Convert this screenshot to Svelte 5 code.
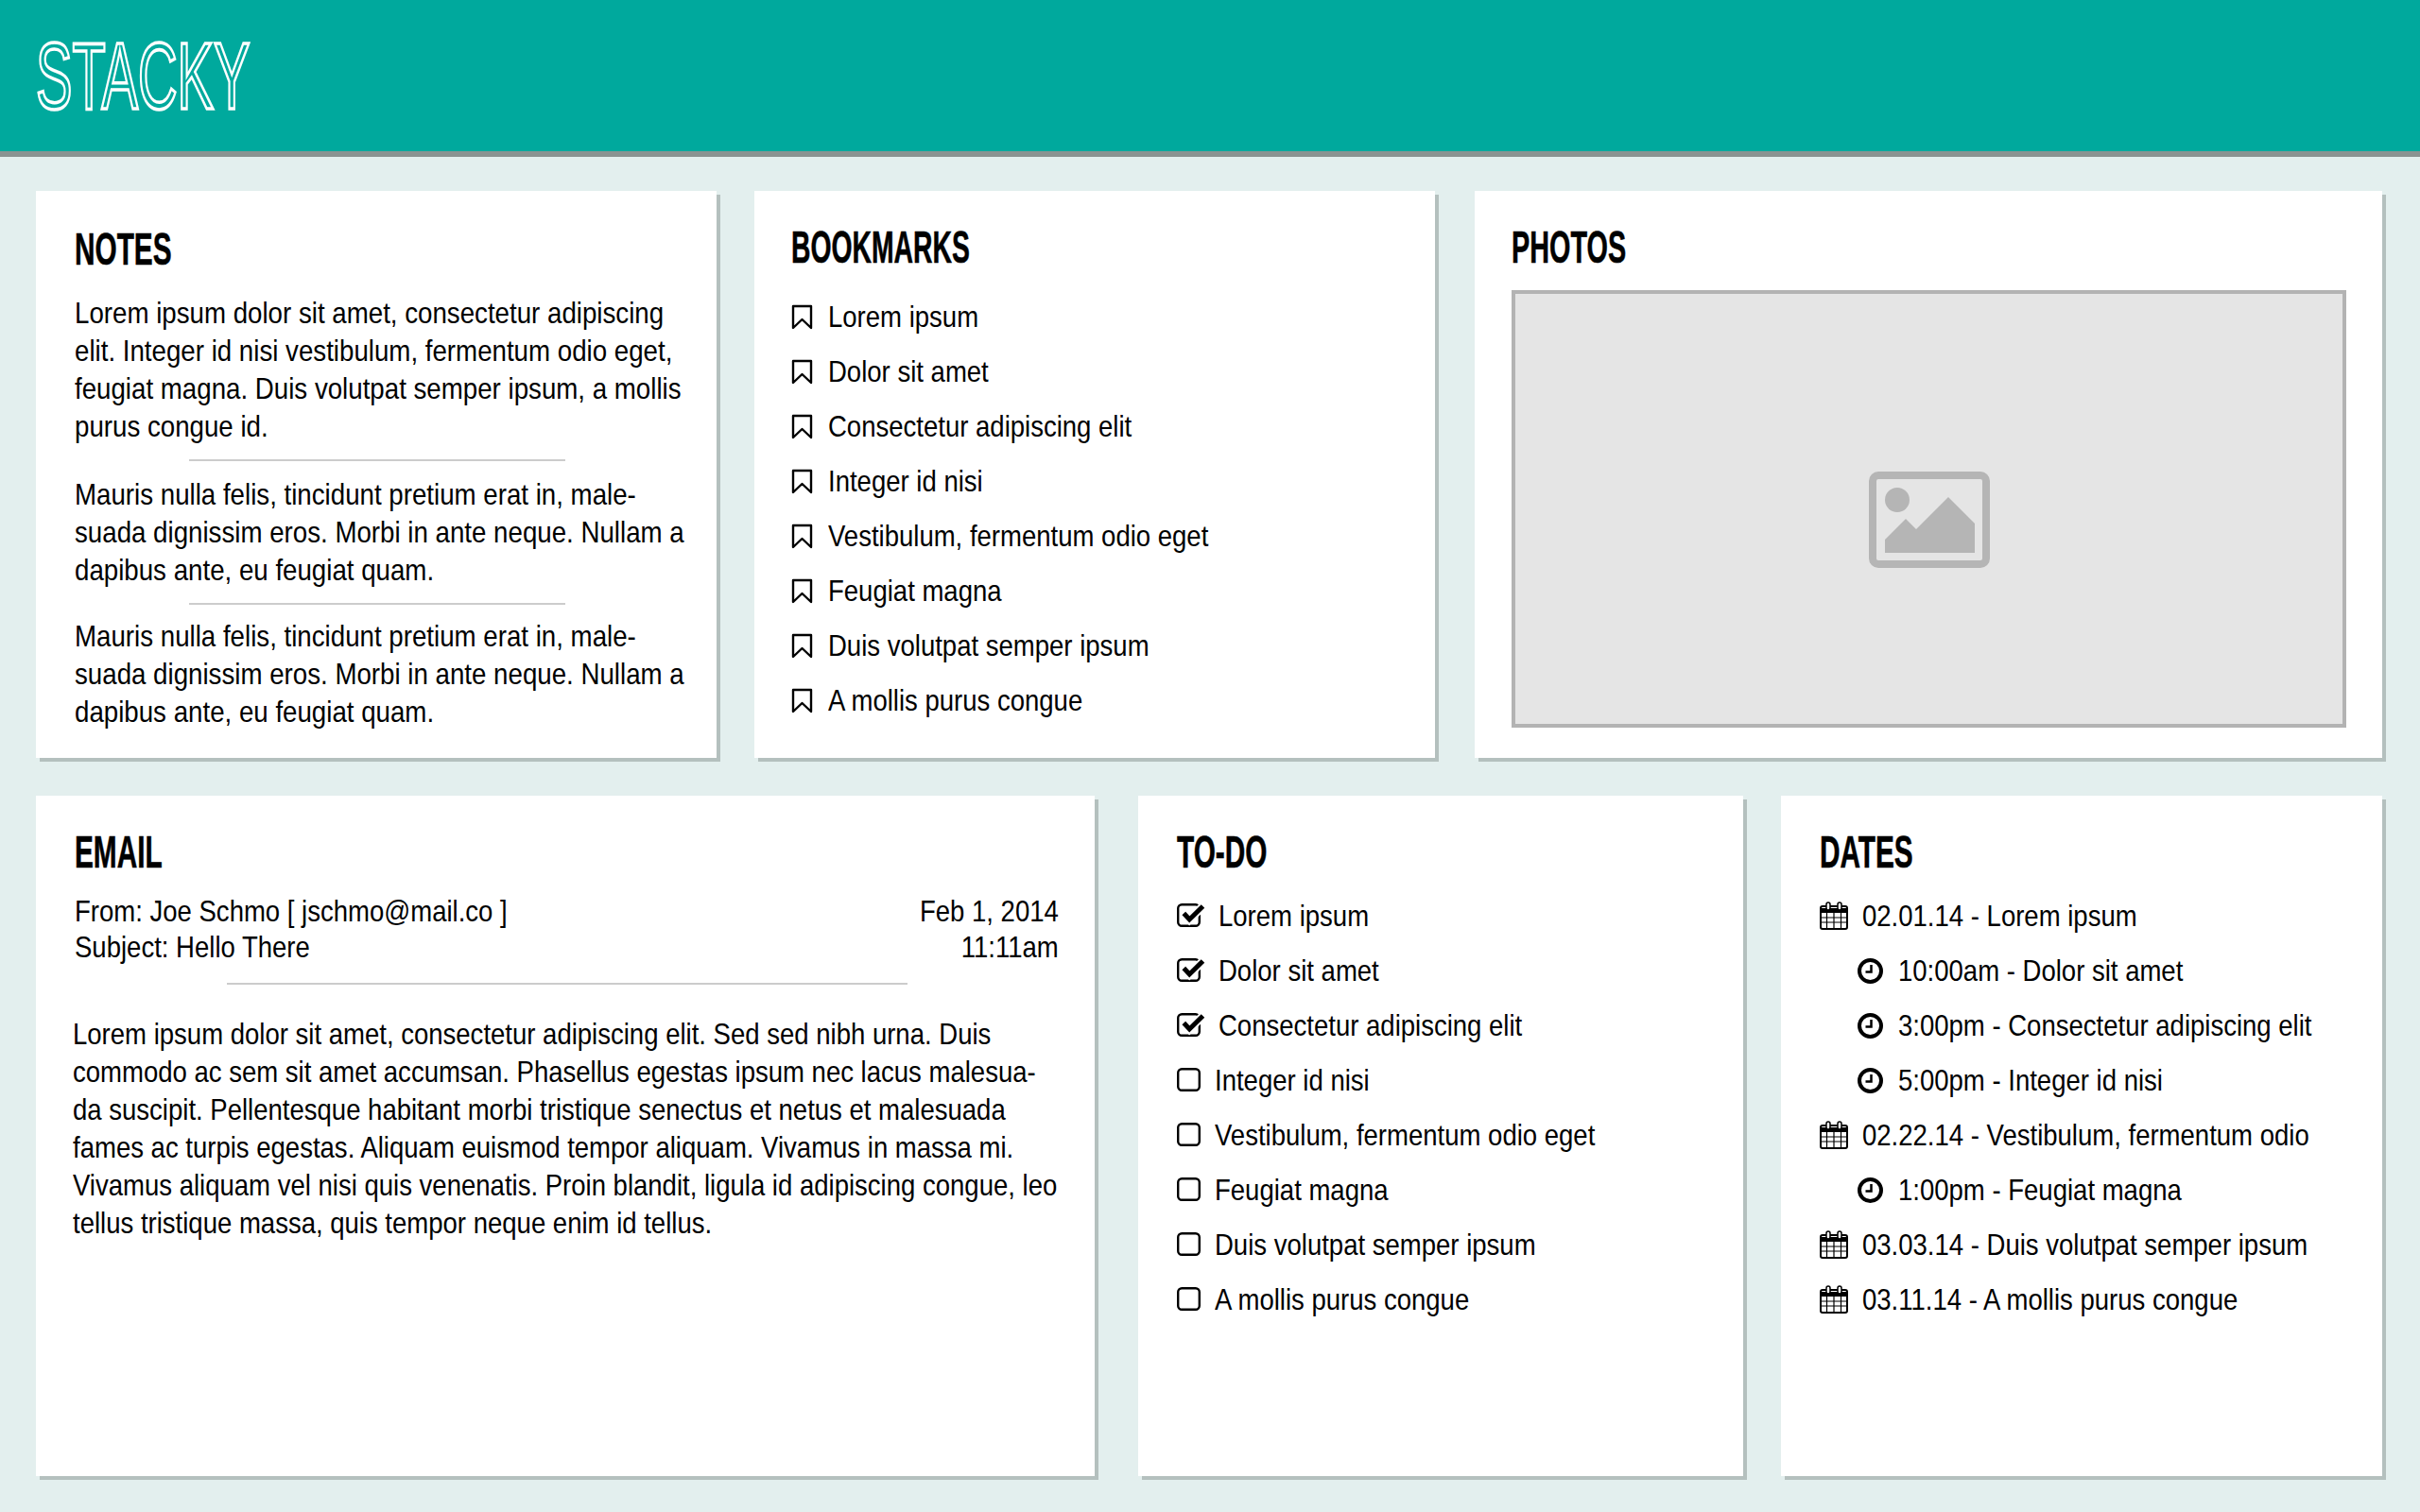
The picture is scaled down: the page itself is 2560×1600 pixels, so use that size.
<script>
const bookmarks = ['Lorem ipsum', 'Dolor sit amet', 'Consectetur adipiscing elit', 'Integer id nisi', 'Vestibulum, fermentum odio eget', 'Feugiat magna', 'Duis volutpat semper ipsum', 'A mollis purus congue'];
const todos = bookmarks.map((text, i) => ({ text, done: i < 3 }));
const dates = [
	{ kind: 'day', text: '02.01.14 - Lorem ipsum' },
	{ kind: 'time', text: '10:00am - Dolor sit amet' },
	{ kind: 'time', text: '3:00pm - Consectetur adipiscing elit' },
	{ kind: 'time', text: '5:00pm - Integer id nisi' },
	{ kind: 'day', text: '02.22.14 - Vestibulum, fermentum odio' },
	{ kind: 'time', text: '1:00pm - Feugiat magna' },
	{ kind: 'day', text: '03.03.14 - Duis volutpat semper ipsum' },
	{ kind: 'day', text: '03.11.14 - A mollis purus congue' }
];
</script>

<header class="top">
	<h1 class="logo">STACKY</h1>
</header>

<main class="page">
	<section class="row row-one">
		<article class="card notes">
			<h2>NOTES</h2>
			<p>Lorem ipsum dolor sit amet, consectetur adipiscing<br />elit. Integer id nisi vestibulum, fermentum odio eget,<br />feugiat magna. Duis volutpat semper ipsum, a mollis<br />purus congue id.</p>
			<hr />
			<p>Mauris nulla felis, tincidunt pretium erat in, male-<br />suada dignissim eros. Morbi in ante neque. Nullam a<br />dapibus ante, eu feugiat quam.</p>
			<hr class="tight" />
			<p>Mauris nulla felis, tincidunt pretium erat in, male-<br />suada dignissim eros. Morbi in ante neque. Nullam a<br />dapibus ante, eu feugiat quam.</p>
		</article>

		<article class="card bookmarks">
			<h2>BOOKMARKS</h2>
			<ul>
				{#each bookmarks as item}
					<li>
						<svg class="bookmark" viewBox="0 0 23 27" fill="none" stroke="#000" stroke-width="2.4" stroke-linejoin="round"><path d="M2 2h19v23l-9.500-9-9.500 9z" /></svg>
						<span>{item}</span>
					</li>
				{/each}
			</ul>
		</article>

		<article class="card photos">
			<h2>PHOTOS</h2>
			<div class="placeholder">
				<svg viewBox="0 0 128 102" width="128" height="102">
					<rect x="4" y="4" width="120" height="94" rx="6" fill="none" stroke="#b5b5b5" stroke-width="8" />
					<circle cx="30" cy="30" r="13" fill="#b5b5b5" />
					<path d="M17 86V72l22-22 11 11 34-34 28 28v31z" fill="#b5b5b5" />
				</svg>
			</div>
		</article>
	</section>

	<section class="row row-two">
		<article class="card email">
			<h2>EMAIL</h2>
			<div class="meta">
				<div>From: Joe Schmo [ jschmo@mail.co ]<br />Subject: Hello There</div>
				<div class="when">Feb 1, 2014<br />11:11am</div>
			</div>
			<hr />
			<p>Lorem ipsum dolor sit amet, consectetur adipiscing elit. Sed sed nibh urna. Duis<br />commodo ac sem sit amet accumsan. Phasellus egestas ipsum nec lacus malesua-<br />da suscipit. Pellentesque habitant morbi tristique senectus et netus et malesuada<br />fames ac turpis egestas. Aliquam euismod tempor aliquam. Vivamus in massa mi.<br />Vivamus aliquam vel nisi quis venenatis. Proin blandit, ligula id adipiscing congue, leo<br />tellus tristique massa, quis tempor neque enim id tellus.</p>
		</article>

		<article class="card todo">
			<h2>TO-DO</h2>
			<ul>
				{#each todos as todo}
					<li class:done={todo.done}>
						<svg class="check" viewBox="0 0 30 26" fill="none" stroke="#000">
							<rect x="1.200" y="1.200" width="22.600" height="22.600" rx="4" stroke-width="2.400" />
							{#if todo.done}
								<path d="M7.300 10.500l6 6.500L27.500 3" stroke="#fff" stroke-width="9" />
								<path d="M7.300 10.500l6 6.500L27.500 3" stroke-width="5" />
							{/if}
						</svg>
						<span>{todo.text}</span>
					</li>
				{/each}
			</ul>
		</article>

		<article class="card dates">
			<h2>DATES</h2>
			<ul>
				{#each dates as d}
					<li class={d.kind}>
						{#if d.kind === 'day'}
							<svg class="cal" viewBox="0 0 30 30" fill="none" stroke="#000">
								<rect x="1" y="5" width="28" height="24" rx="2" stroke-width="2" />
								<path d="M1 7h28v5H1z" fill="#000" stroke="none" />
								<path d="M1 17h28M1 22h28M7.500 12v16M15 12v16M22.500 12v16" stroke-width="1.200" />
								<rect x="7" y="1" width="4" height="8" rx="2" fill="#fff" stroke-width="1.500" />
								<rect x="19" y="1" width="4" height="8" rx="2" fill="#fff" stroke-width="1.500" />
							</svg>
						{:else}
							<svg class="clock" viewBox="0 0 27 27" fill="none" stroke="#000">
								<circle cx="13.500" cy="13.500" r="11.500" stroke-width="4" />
								<path d="M14.500 7v7.500H8.500" stroke-width="2.500" />
							</svg>
						{/if}
						<span>{d.text}</span>
					</li>
				{/each}
			</ul>
		</article>
	</section>
</main>

<style>
	:global(body) {
		background: #e3efee;
		color: #000;
		font-family: "Liberation Sans", Arial, sans-serif;
		font-size: 32px;
		line-height: 40px;
	}

	.top {
		height: 160px;
		background: #00a99d;
		border-bottom: 6px solid #8a9391;
		overflow: hidden;
	}

	.logo {
		margin: 30px 0 0 38px;
		font-size: 100px;
		font-weight: 400;
		line-height: 100px;
		color: transparent;
		-webkit-text-stroke: 3.6px #fff;
		transform: scaleX(0.577);
		transform-origin: left top;
	}

	.page {
		padding: 36px 38px;
		display: flex;
		flex-direction: column;
		gap: 40px;
	}

	.row {
		display: grid;
		gap: 40px;
	}

	.row-one {
		grid-template-columns: 720px 720px 962px;
		height: 600px;
	}

	.row-two {
		grid-template-columns: 1120px 646px 636px;
		height: 720px;
	}

	.todo {
		margin-left: 6px;
	}

	.photos {
		margin-left: 2px;
	}

	.card {
		background: #fff;
		box-shadow: 4px 4px 0 #b4c0be;
		padding: 32px 40px 0 41px;
		min-width: 0;
		min-height: 0;
	}

	.bookmarks,
	.photos {
		padding-left: 39px;
	}

	.photos,
	.email {
		padding-right: 38px;
	}

	h2 {
		margin: 0 0 16px;
		font-size: 48px;
		line-height: 56px;
		font-weight: 700;
		-webkit-text-stroke: 0.6px #000;
		transform: scaleX(0.62);
		transform-origin: left center;
	}

	.notes {
		padding-top: 34px;
	}

	.notes h2 {
		margin-bottom: 19px;
	}

	.bookmarks h2 {
		transform: scaleX(0.59);
	}

	.photos h2 {
		margin-bottom: 17px;
		transform: scaleX(0.6);
	}

	.todo h2,
	.dates h2 {
		margin-bottom: 10px;
	}

	p,
	li span,
	.meta div {
		margin: 0;
		white-space: nowrap;
		transform: scaleX(0.86);
		transform-origin: left center;
	}

	.notes p {
		transform: scaleX(0.865);
	}

	.meta .when {
		text-align: right;
		transform-origin: right center;
	}

	hr {
		border: none;
		height: 2px;
		background: #ccc;
		margin: 15px auto;
		width: 398px;
	}

	hr.tight {
		margin-bottom: 13px;
	}

	ul {
		list-style: none;
		margin: 0;
		padding: 0;
	}

	li {
		display: flex;
		align-items: center;
		height: 58px;
	}

	svg {
		flex: none;
	}

	.bookmark {
		width: 23px;
		height: 27px;
		margin-right: 16px;
	}

	.check {
		width: 30px;
		height: 26px;
		margin-right: 14px;
	}

	li:not(.done) .check {
		margin-right: 10px;
	}

	.cal {
		width: 30px;
		height: 30px;
		margin-right: 15px;
	}

	.clock {
		width: 27px;
		height: 27px;
		margin: 0 16px 0 40px;
	}

	.placeholder {
		height: 463px;
		box-sizing: border-box;
		padding-top: 22px;
		border: 4px solid #b3b3b3;
		background: #e5e5e5;
		display: flex;
		align-items: center;
		justify-content: center;
	}

	.meta {
		display: flex;
		justify-content: space-between;
		line-height: 37.500px;
	}

	.email hr {
		width: 720px;
		margin: 19px auto 32px;
	}

	.email p {
		margin-left: -2px;
	}
</style>
